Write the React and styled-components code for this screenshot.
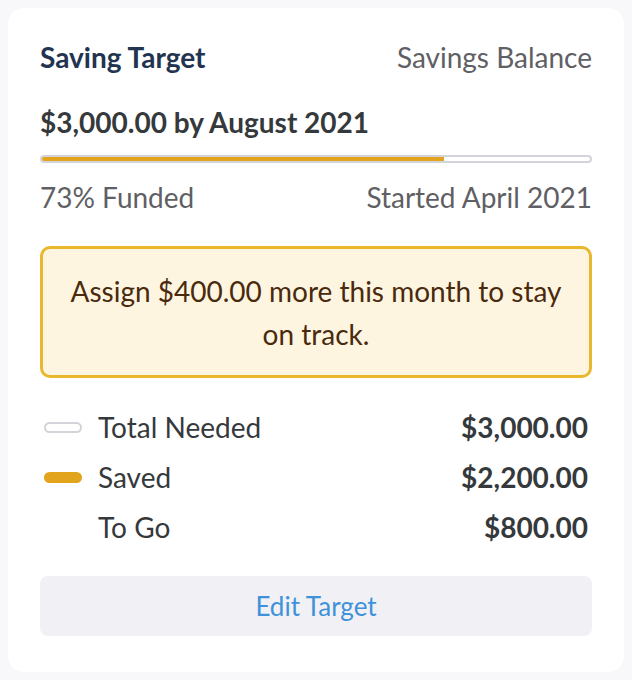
import styled, { createGlobalStyle } from "styled-components";

const GlobalStyle = createGlobalStyle`
  html, body {
    margin: 0;
    padding: 0;
    background: #f8f7fa;
  }
  body {
    padding: 8px;
    font-family: Lato, "Liberation Sans", sans-serif;
  }
  * {
    box-sizing: border-box;
  }
`;

const Card = styled.section`
  width: 616px;
  height: 664px;
  background: #fff;
  border-radius: 16px;
  padding: 33px 32px 36px;
  display: flex;
  flex-direction: column;
`;

const Header = styled.div`
  display: flex;
  justify-content: space-between;
  align-items: center;
  height: 32px;
`;

const Title = styled.h2`
  margin: 0;
  font-size: 28px;
  line-height: 32px;
  font-weight: 700;
  color: #22344f;
`;

const Muted = styled.span`
  font-size: 28px;
  line-height: 32px;
  color: #5f6064;
`;

const Goal = styled.div`
  margin-top: 33px;
  font-size: 28px;
  font-weight: 700;
  color: #35393c;
  line-height: 32px;
`;

const Track = styled.div`
  margin-top: 17px;
  height: 8px;
  border: 2px solid #d3d3d9;
  border-radius: 4px;
  background: #fff;
  position: relative;
  overflow: hidden;
`;

const Fill = styled.div`
  position: absolute;
  left: -2px;
  top: -2px;
  bottom: -2px;
  background: #e1a41c;
  border-radius: 4px 0 0 4px;
`;

const Meta = styled.div`
  margin-top: 18px;
  display: flex;
  justify-content: space-between;
`;

const Callout = styled.div`
  margin-top: 33px;
  border: 3px solid #e9b72b;
  border-radius: 10px;
  background: #fef5e1;
  padding: 21px 24px 19px;
  text-align: center;
  font-size: 28px;
  line-height: 43px;
  color: #4a2a0d;
`;

const Rows = styled.div`
  margin-top: 33px;
  display: flex;
  flex-direction: column;
  gap: 18px;
`;

const Row = styled.div`
  display: flex;
  align-items: center;
  height: 32px;
  padding: 0 4px;
`;

const Pill = styled.span`
  width: 38px;
  height: 11px;
  border-radius: 6px;
  margin-right: 16px;
  background: ${({ $filled }) => ($filled ? "#e1a41c" : "#fff")};
  border: ${({ $filled, $hidden }) =>
    $hidden || $filled ? "none" : "2px solid #d3d3d9"};
  visibility: ${({ $hidden }) => ($hidden ? "hidden" : "visible")};
`;

const Label = styled.span`
  flex: 1;
  font-size: 28px;
  line-height: 32px;
  color: #35393c;
`;

const Value = styled.span`
  font-size: 28px;
  line-height: 32px;
  font-weight: 700;
  color: #35393c;
`;

const EditButton = styled.button`
  margin-top: 33px;
  height: 60px;
  border: none;
  border-radius: 8px;
  background: #f1f1f5;
  color: #3f91da;
  font-family: Lato, "Liberation Sans", sans-serif;
  font-size: 26px;
  cursor: pointer;
`;

const target = 3000;
const saved = 2200;

const rows = [
  { label: "Total Needed", value: "$3,000.00", pill: "empty" },
  { label: "Saved", value: "$2,200.00", pill: "filled" },
  { label: "To Go", value: "$800.00", pill: "none" },
];

export default function App() {
  const ratio = (saved / target) * 100;
  return (
    <>
      <GlobalStyle />
      <Card>
        <Header>
          <Title>Saving Target</Title>
          <Muted>Savings Balance</Muted>
        </Header>
        <Goal>$3,000.00 by August 2021</Goal>
        <Track>
          <Fill style={{ width: `calc(${ratio}% + 2px)` }} />
        </Track>
        <Meta>
          <Muted>{Math.floor(ratio)}% Funded</Muted>
          <Muted>Started April 2021</Muted>
        </Meta>
        <Callout>Assign $400.00 more this month to stay on track.</Callout>
        <Rows>
          {rows.map((r) => (
            <Row key={r.label}>
              <Pill $filled={r.pill === "filled"} $hidden={r.pill === "none"} />
              <Label>{r.label}</Label>
              <Value>{r.value}</Value>
            </Row>
          ))}
        </Rows>
        <EditButton>Edit Target</EditButton>
      </Card>
    </>
  );
}
